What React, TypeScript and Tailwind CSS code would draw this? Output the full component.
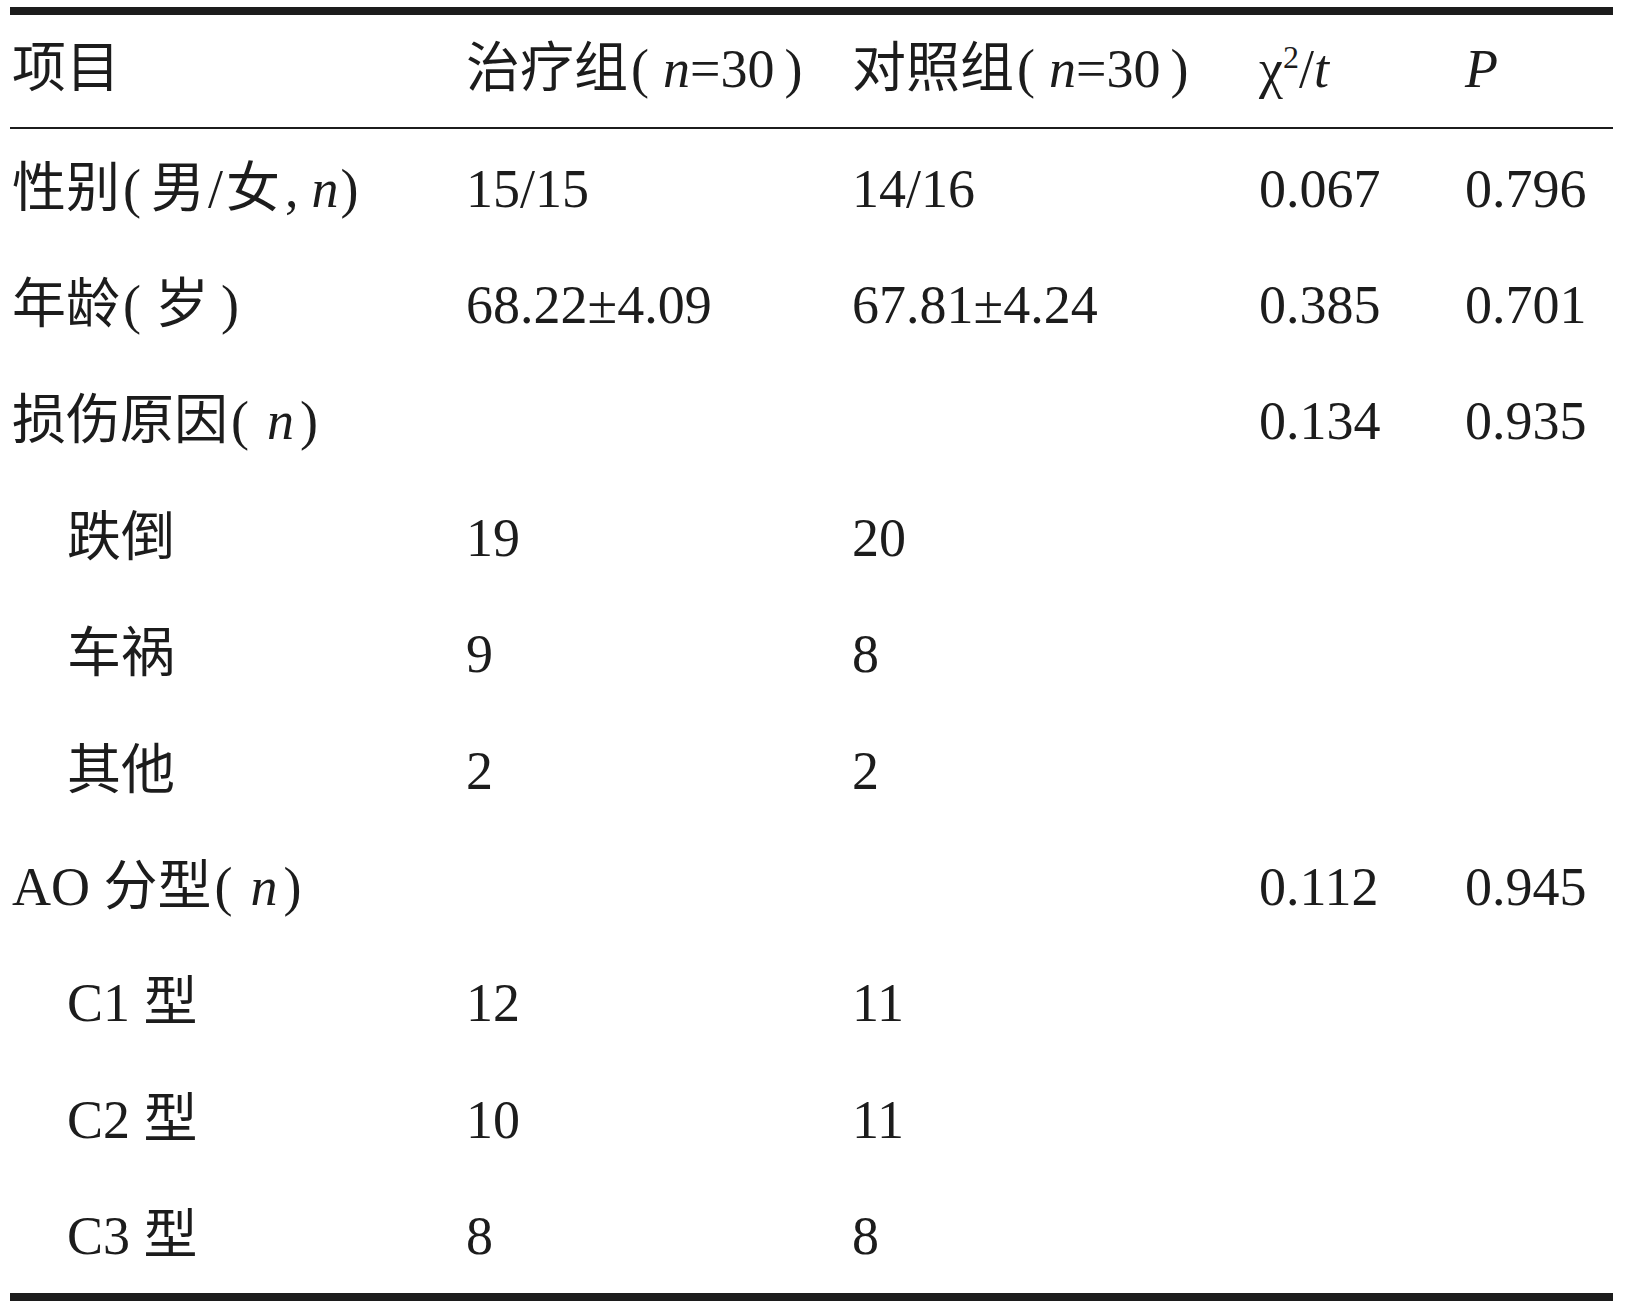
import React from 'react';

type Row = {
  label: React.ReactNode;
  sub?: boolean;
  a?: string;
  b?: string;
  stat?: string;
  p?: string;
};

const N = () => <i>n</i>;

// Chinese typesetting leaves extra room inside the brackets
function Paren({ children, inner = 'mr-[18px]', close = 'ml-[6px]' }: { children: React.ReactNode; inner?: string; close?: string }) {
  return (
    <>
      <span className={`ml-[3px] ${inner}`}>(</span>
      {children}
      <span className={close}>)</span>
    </>
  );
}

const rows: Row[] = [
  {
    label: (
      <>
        性别
        <Paren inner="mr-[10px]" close="ml-[2px]">
          男<span className="mx-[3px]">/</span>女<span className="ml-[5px] mr-[13px]">,</span>
          <N />
        </Paren>
      </>
    ),
    a: '15/15',
    b: '14/16',
    stat: '0.067',
    p: '0.796',
  },
  {
    label: (
      <>
        年龄
        <Paren inner="mr-[14px]" close="ml-[12px]">岁</Paren>
      </>
    ),
    a: '68.22±4.09',
    b: '67.81±4.24',
    stat: '0.385',
    p: '0.701',
  },
  {
    label: (
      <>
        损伤原因
        <Paren>
          <N />
        </Paren>
      </>
    ),
    stat: '0.134',
    p: '0.935',
  },
  { label: '跌倒', sub: true, a: '19', b: '20' },
  { label: '车祸', sub: true, a: '9', b: '8' },
  { label: '其他', sub: true, a: '2', b: '2' },
  {
    label: (
      <>
        AO 分型
        <Paren>
          <N />
        </Paren>
      </>
    ),
    stat: '0.112',
    p: '0.945',
  },
  { label: 'C1 型', sub: true, a: '12', b: '11' },
  { label: 'C2 型', sub: true, a: '10', b: '11' },
  { label: 'C3 型', sub: true, a: '8', b: '8' },
];

const cols = 'grid grid-cols-[456px_386px_407px_206px_1fr]';

export default function App() {
  return (
    <div className="min-h-screen bg-white pt-[7px] pl-[10px]">
      <div
        className="w-[1603px] text-[54px] leading-none text-[#1c1c1c]"
        style={{ fontFamily: '"Liberation Serif", "Noto Sans CJK SC", serif' }}
      >
        <div className="h-[8px] bg-[#1c1c1c]" />
        <div className={`${cols} h-[112px] items-center pb-[4px]`}>
          <div className="pl-[2px]">项目</div>
          <div>
            治疗组
            <Paren inner="mr-[14px]" close="ml-[10px]">
              <N />=30
            </Paren>
          </div>
          <div>
            对照组
            <Paren inner="mr-[14px]" close="ml-[10px]">
              <N />=30
            </Paren>
          </div>
          <div>
            χ<sup className="text-[32px] -top-[0.6em]">2</sup>/<i>t</i>
          </div>
          <div>
            <i>P</i>
          </div>
        </div>
        <div className="h-[2px] bg-[#1c1c1c]" />
        {rows.map((r, i) => (
          <div key={i} className={`${cols} h-[116.4px] items-center pt-[3px]`}>
            <div className={r.sub ? 'pl-[57px]' : 'pl-[2px]'}>{r.label}</div>
            <div>{r.a}</div>
            <div>{r.b}</div>
            <div>{r.stat}</div>
            <div>{r.p}</div>
          </div>
        ))}
        <div className="h-[8px] bg-[#1c1c1c]" />
      </div>
    </div>
  );
}
